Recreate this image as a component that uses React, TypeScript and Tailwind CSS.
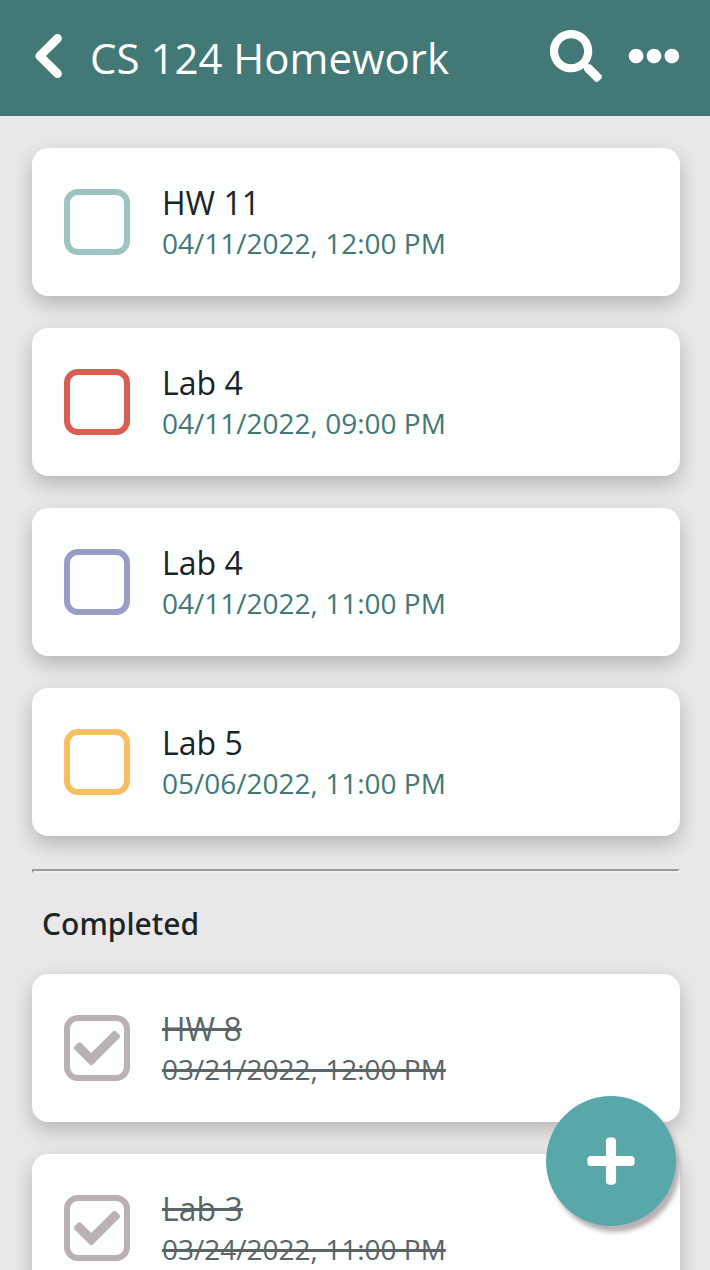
import { useState } from "react";
import { FaCheck, FaEllipsisH, FaPlus, FaSearch } from "react-icons/fa";

type Task = {
  id: string;
  title: string;
  due: string;
  done: boolean;
  border: string;
};

const initialTasks: Task[] = [
  { id: "hw11", title: "HW 11", due: "04/11/2022, 12:00 PM", done: false, border: "border-[#9dc4c0]" },
  { id: "lab4a", title: "Lab 4", due: "04/11/2022, 09:00 PM", done: false, border: "border-[#d95d50]" },
  { id: "lab4b", title: "Lab 4", due: "04/11/2022, 11:00 PM", done: false, border: "border-[#979dc5]" },
  { id: "lab5", title: "Lab 5", due: "05/06/2022, 11:00 PM", done: false, border: "border-[#f6bf62]" },
  { id: "hw8", title: "HW 8", due: "03/21/2022, 12:00 PM", done: true, border: "border-[#b9b1b4]" },
  { id: "lab3", title: "Lab 3", due: "03/24/2022, 11:00 PM", done: true, border: "border-[#b9b1b4]" },
];

function BackIcon() {
  return (
    <svg viewBox="0 0 32 52" className="h-[52px] w-8" fill="none" aria-hidden="true">
      <path
        d="M25.5 8.3 7.8 26l17.7 17.7"
        stroke="currentColor"
        strokeWidth="8.8"
        strokeLinecap="round"
        strokeLinejoin="round"
      />
    </svg>
  );
}

function TaskCard({ task, onToggle }: { task: Task; onToggle: () => void }) {
  return (
    <li className="flex items-center gap-8 rounded-2xl bg-[#fdfefe] px-8 py-8 shadow-[0_8px_20px_rgba(0,0,0,0.22)]">
      <span className="relative flex size-[66px] shrink-0">
        <input
          id={task.id}
          type="checkbox"
          checked={task.done}
          onChange={onToggle}
          className={`size-full cursor-pointer appearance-none rounded-[14px] border-6 ${task.done ? "border-[#b9b1b4]" : task.border}`}
        />
        {task.done && (
          <FaCheck className="pointer-events-none absolute inset-0 m-auto size-[46px] text-[#b9b1b4]" />
        )}
      </span>
      <label
        htmlFor={task.id}
        className={`flex min-w-0 cursor-pointer flex-col pt-[3px] pb-px ${task.done ? "text-[#5b6566] line-through decoration-[3px]" : "text-[#1a2528]"}`}
      >
        <span className="text-[32px] leading-[40px]">{task.title}</span>
        <span className={`text-[28px] leading-[40px] ${task.done ? "" : "text-[#427876]"}`}>{task.due}</span>
      </label>
    </li>
  );
}

export default function App() {
  const [tasks, setTasks] = useState(initialTasks);
  const toggle = (id: string) =>
    setTasks((all) => all.map((t) => (t.id === id ? { ...t, done: !t.done } : t)));
  const card = (t: Task) => <TaskCard key={t.id} task={t} onToggle={() => toggle(t.id)} />;

  return (
    <div className="h-screen overflow-hidden bg-[#e9e7e8] font-['Open_Sans','Noto_Sans',sans-serif]">
      <div className="flex h-full flex-col">
        <header className="flex h-29 shrink-0 items-center bg-[#427876] pr-[30px] pb-1 pl-8 text-white">
          <button type="button" aria-label="Back" className="cursor-pointer">
            <BackIcon />
          </button>
          <h1 className="ml-[26px] flex-1 truncate pt-[3px] text-[42px] leading-[56px]">CS 124 Homework</h1>
          <button type="button" aria-label="Search" className="mr-[26px] cursor-pointer">
            <FaSearch className="size-[52px]" />
          </button>
          <button type="button" aria-label="More options" className="cursor-pointer">
            <FaEllipsisH className="size-[52px]" />
          </button>
        </header>
        <main className="min-h-0 flex-1 overflow-y-auto py-8 pr-[30px] pl-8 [scrollbar-width:none]">
          <ul className="flex flex-col gap-8">{tasks.filter((t) => !t.done).map(card)}</ul>
          <hr className="mt-[33px] h-1 border-2 border-t-[#9a9a9a] border-r-[#eeeeee] border-b-[#eeeeee] border-l-[#9a9a9a]" />
          <h2 className="mt-[29px] mb-7 px-[10px] font-['Noto_Sans',sans-serif] text-[30px] leading-[44px] font-medium text-[#1a2528]">
            Completed
          </h2>
          <ul className="flex flex-col gap-8">{tasks.filter((t) => t.done).map(card)}</ul>
        </main>
      </div>
      <button
        type="button"
        aria-label="Add task"
        className="fixed right-[34px] bottom-11 flex size-[130px] cursor-pointer items-center justify-center rounded-full bg-[#59a8a9] text-white shadow-[4px_6px_4px_#b9b1b4]"
      >
        <FaPlus className="size-[54px]" />
      </button>
    </div>
  );
}
